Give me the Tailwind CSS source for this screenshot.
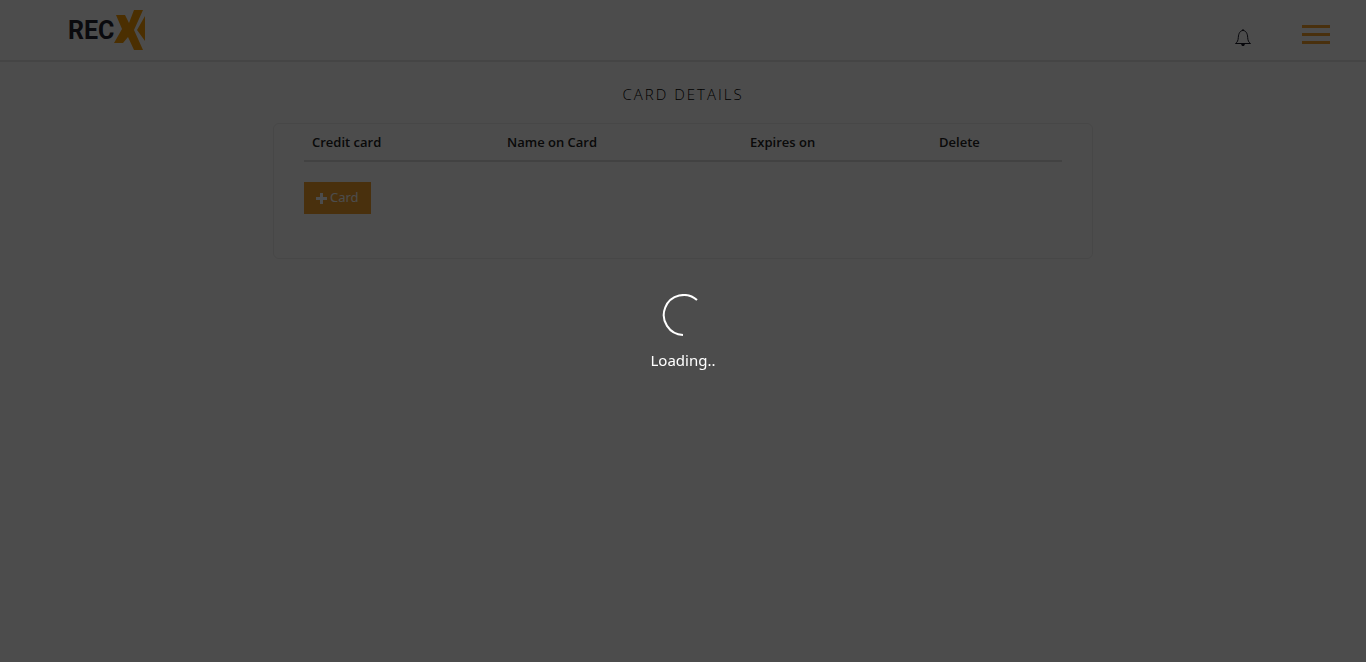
<!DOCTYPE html>
<html lang="en">
<head>
<meta charset="utf-8">
<meta name="viewport" content="width=device-width, initial-scale=1">
<title>RECX - Card details</title>
<script src="https://cdn.jsdelivr.net/npm/@tailwindcss/browser@4"></script>
</head>
<body class="flex min-h-screen flex-col bg-white font-['Noto_Sans',sans-serif] text-[#222]">
<header class="flex h-[62px] items-start justify-between border-b-2 border-[#e7e7e7] pl-[68px] pr-9">
  <a href="#" aria-label="RECX home" class="flex h-[60px] items-center text-[25px] leading-none font-bold text-[#24242f]">
    <span class="w-[46px] font-['Roboto',sans-serif]">REC</span>
    <svg class="h-10 w-8" viewBox="0 0 32 40" fill="#fa9f05" aria-hidden="true"><path d="M2 5h9l4 8 5-13h9l-9 20 9 20h-9l-6-13-5 6H0l8-14zM31 6v25l-8-11z"/></svg>
  </a>
  <div class="flex items-start gap-[51px] pt-[25px]">
    <button type="button" aria-label="Notifications" class="pt-1">
      <svg class="h-[17px] w-4" viewBox="0 0 16 17" fill="none" stroke="#191927" aria-hidden="true"><path d="M8 0v2M.5 14.500h15c-2-1.400-2.600-3-2.800-6C12.500 4 10.500 1.500 8 1.500S3.500 4 3.300 8.500C3.100 11.500 2.500 13.100.5 14.500z"/><path d="M6 15h4l-1 2H7z" fill="#191927" stroke="none"/></svg>
    </button>
    <button type="button" aria-label="Menu" class="flex w-7 flex-col gap-[5px]">
      <span class="h-[3px] w-full bg-[#f5a12d]"></span><span class="h-[3px] w-full bg-[#f5a12d]"></span><span class="h-[3px] w-full bg-[#f5a12d]"></span>
    </button>
  </div>
</header>
<main class="mx-auto w-full max-w-[820px] flex-1 pt-5">
  <h1 class="text-center font-['Open_Sans','Noto_Sans',sans-serif] text-[15px] leading-6 font-light tracking-[2px] text-black">CARD DETAILS</h1>
  <section class="mt-[17px] rounded-md border border-[#eee] px-[30px] pb-11">
    <table class="w-full table-fixed text-left font-['Open_Sans','Noto_Sans',sans-serif] text-[13px] leading-5">
      <thead class="border-b-2 border-[#ddd]">
        <tr>
          <th scope="col" class="h-[37px] w-[195px] px-2 font-semibold">Credit card</th>
          <th scope="col" class="w-[243px] px-2 font-semibold">Name on Card</th>
          <th scope="col" class="w-[189px] px-2 font-semibold">Expires on</th>
          <th scope="col" class="px-2 font-semibold">Delete</th>
        </tr>
      </thead>
    </table>
    <button type="button" class="mt-5 flex h-8 items-center gap-[3px] bg-[#f5a12d] px-3 text-[13px] text-white">
      <svg class="size-[11px]" viewBox="0 0 11 11" fill="currentColor" aria-hidden="true"><path d="M4 0h3v4h4v3H7v4H4V7H0V4h4z"/></svg>
      Card
    </button>
  </section>
</main>
<div role="status" class="fixed inset-0 flex flex-col items-center justify-center gap-3 bg-black/70 pt-1 text-[15px] leading-6 text-white">
  <svg class="size-[42px]" viewBox="0 0 42 42" fill="none" stroke="currentColor" stroke-width="2" aria-hidden="true"><path d="M35 6A20 20 0 1 0 21 41"/></svg>
  <span>Loading..</span>
</div>
</body>
</html>
